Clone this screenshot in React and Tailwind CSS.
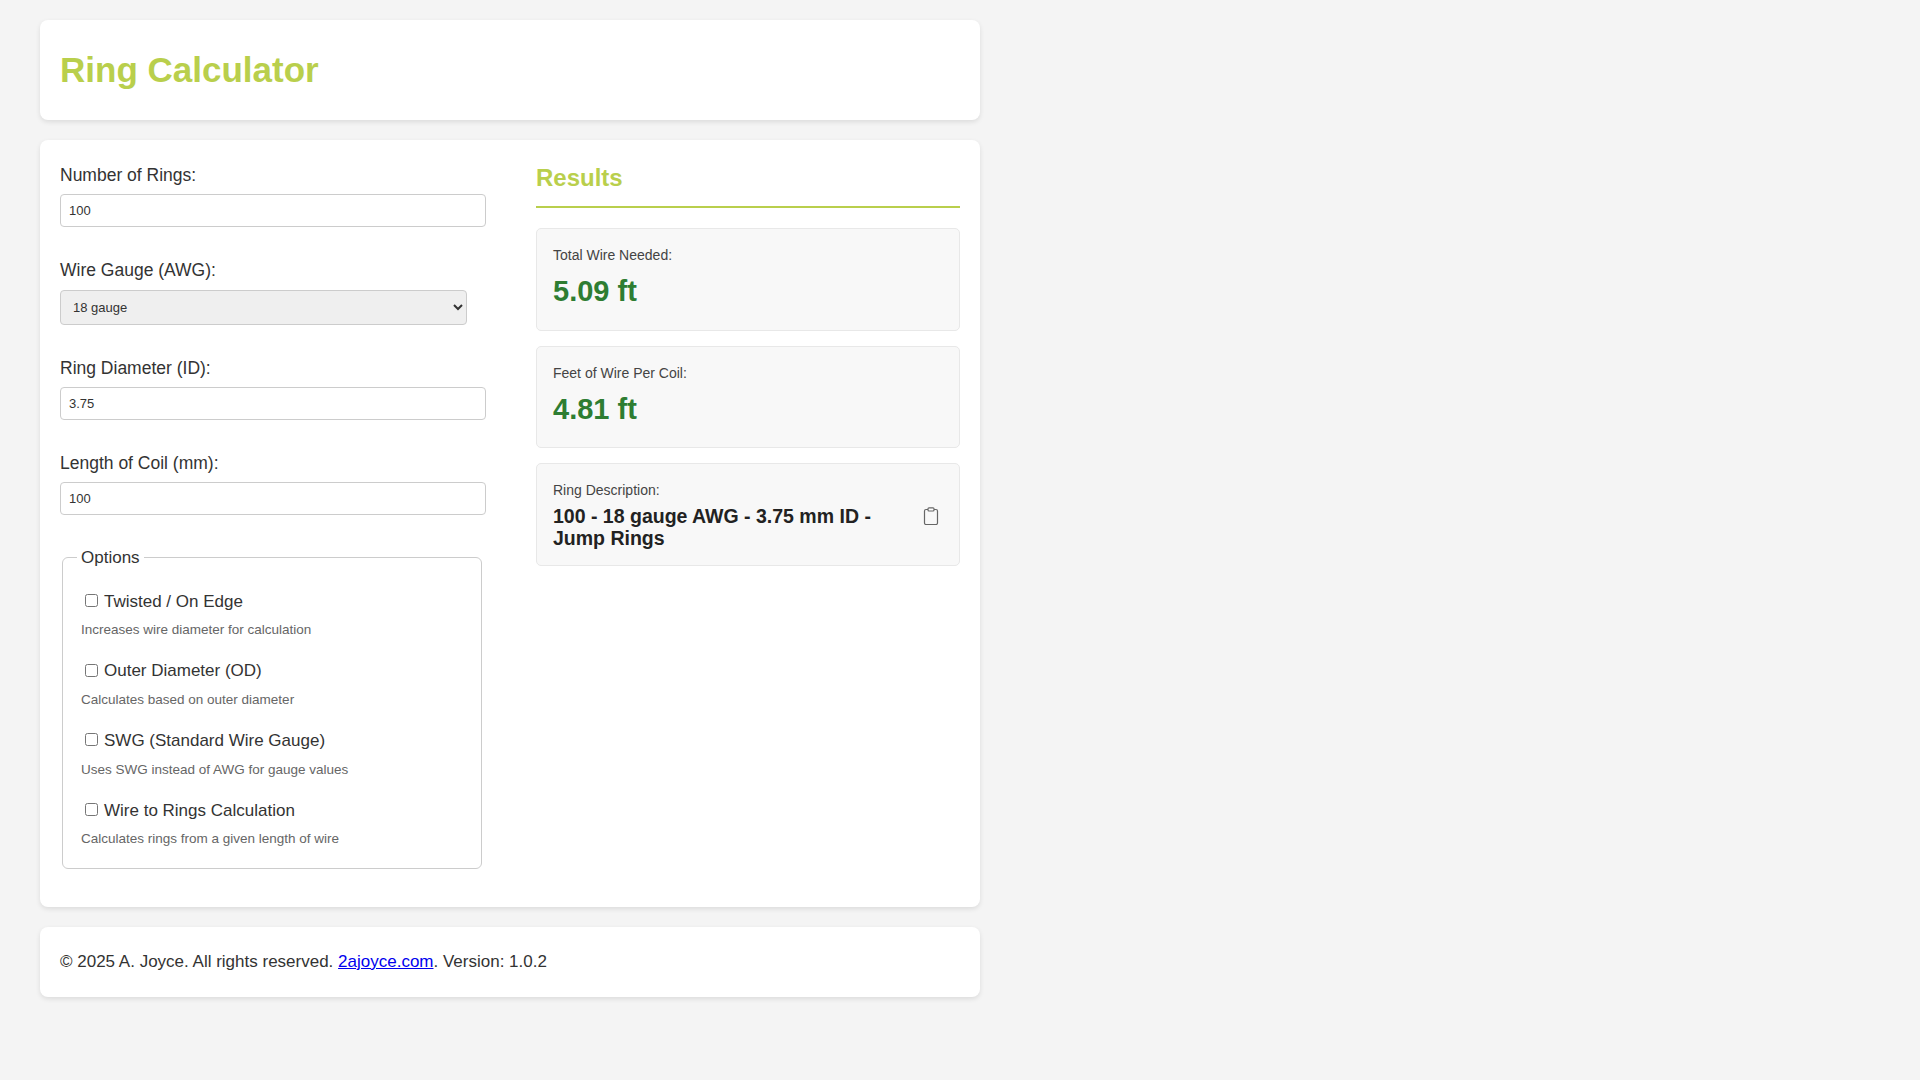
import { useState } from 'react';

const options = [
  ['Twisted / On Edge', 'Increases wire diameter for calculation'],
  ['Outer Diameter (OD)', 'Calculates based on outer diameter'],
  ['SWG (Standard Wire Gauge)', 'Uses SWG instead of AWG for gauge values'],
  ['Wire to Rings Calculation', 'Calculates rings from a given length of wire'],
];

function Field({ label, value }) {
  return (
    <div className="mb-[30px]">
      <label className="block text-[17.5px] mb-[6px]">{label}</label>
      <input
        defaultValue={value}
        className="w-[426px] h-[33px] px-2 text-[13px] border border-[#ccc] rounded-[4px] bg-white"
      />
    </div>
  );
}

function ResultBox({ label, children }) {
  return (
    <div className="bg-[#f8f8f8] border border-[#e8e8e8] rounded-[5px] px-4 pt-4 pb-4 mb-[15px]">
      <p className="text-[14px] text-[#444] mb-1">{label}</p>
      {children}
    </div>
  );
}

export default function App() {
  const [checked, setChecked] = useState({});
  return (
    <div className="min-h-screen bg-[#f4f4f4] pt-5 pl-10 text-[#333] font-[family-name:Liberation_Sans,Arial,sans-serif]">
      <div className="w-[940px]">
        <div className="bg-white rounded-[8px] shadow-[0_2px_5px_rgba(0,0,0,0.1)] h-[100px] px-5 flex items-center mb-5">
          <h1 className="text-[35px] font-bold text-[#b9cf4c]">Ring Calculator</h1>
        </div>

        <div className="bg-white rounded-[8px] shadow-[0_2px_5px_rgba(0,0,0,0.1)] px-5 pt-[22px] pb-[38px] mb-5 flex gap-[50px]">
          <div className="w-[426px]">
            <Field label="Number of Rings:" value="100" />
            <div className="mb-[30px]">
              <label className="block text-[17.5px] mb-[6px]">Wire Gauge (AWG):</label>
              <select className="w-[407px] h-[35px] px-2 text-[13px] border border-[#ccc] rounded-[4px] bg-[#efefef]">
                <option>18 gauge</option>
              </select>
            </div>
            <Field label="Ring Diameter (ID):" value="3.75" />
            <Field label="Length of Coil (mm):" value="100" />
            <fieldset className="mx-[2px] w-[420px] border border-[#ccc] rounded-[6px] px-[18px] pt-[12px] pb-[18px]">
              <legend className="px-[4px] text-[17px] ml-[-4px]">Options</legend>
              {options.map(([t, d], i) => (
                <div key={t} className={i ? 'mt-[18px]' : 'mt-[6px]'}>
                  <label className="flex items-center gap-[6px] text-[17px]">
                    <input
                      type="checkbox"
                      className="w-[13px] h-[13px] ml-[4px] -mt-[2px]"
                      checked={!!checked[t]}
                      onChange={() => setChecked({ ...checked, [t]: !checked[t] })}
                    />
                    {t}
                  </label>
                  <p className="text-[13.5px] text-[#666] mt-[6px]">{d}</p>
                </div>
              ))}
            </fieldset>
          </div>

          <div className="w-[424px]">
            <h2 className="text-[24px] font-bold text-[#b9cf4c] pb-[10px] border-b-2 border-[#b9cf4c] mb-[20px] mt-[-2px]">
              Results
            </h2>
            <ResultBox label="Total Wire Needed:">
              <p className="text-[29px] font-bold text-[#2e7d32]">5.09 ft</p>
            </ResultBox>
            <ResultBox label="Feet of Wire Per Coil:">
              <p className="text-[29px] font-bold text-[#2e7d32]">4.81 ft</p>
            </ResultBox>
            <ResultBox label="Ring Description:">
              <div className="flex items-start justify-between">
                <p className="text-[19.5px] font-bold text-[#222] leading-[22px] w-[340px]">
                  100 - 18 gauge AWG - 3.75 mm ID - Jump Rings
                </p>
                <svg width="16" height="18" viewBox="0 0 16 18" className="mt-[2px] mr-[4px]" fill="none" stroke="#666" strokeWidth="1.2">
                  <rect x="1.5" y="2.5" width="13" height="15" rx="1.5" />
                  <rect x="5" y="0.8" width="6" height="3.2" rx="1" fill="white" />
                </svg>
              </div>
            </ResultBox>
          </div>
        </div>

        <div className="bg-white rounded-[8px] shadow-[0_2px_5px_rgba(0,0,0,0.1)] h-[70px] px-5 flex items-center text-[17px]">
          <p>
            © 2025 A. Joyce. All rights reserved. <a href="#" className="text-[#0000ee] underline">2ajoyce.com</a>. Version: 1.0.2
          </p>
        </div>
      </div>
    </div>
  );
}
